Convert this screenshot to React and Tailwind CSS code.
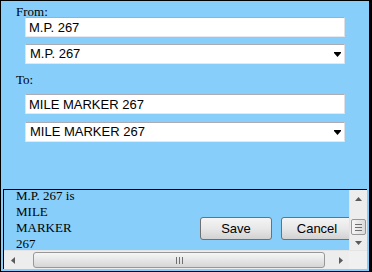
import React from 'react';

const serif = "font-['Liberation_Serif',serif]";
const sans = "font-['Liberation_Sans',Arial,sans-serif]";

const DropArrow = () => (
    <svg width="7" height="5" viewBox="0 0 7 5">
        <rect x="0" y="0" width="7" height="1" fill="#000" />
        <polygon points="0,1 7,1 3.5,5" fill="#000" />
    </svg>
);

const TextBox = ({ value }) => (
    <input
        readOnly
        defaultValue={value}
        className={`ml-[24px] block h-[20px] w-[320px] border border-t-[#abadb3] border-l-[#e2e3ea] border-r-[#dbdfe6] border-b-[#e3e9ef] bg-white px-[3px] text-[13px] leading-[18px] text-black outline-none ${sans}`}
    />
);

const SelectBox = ({ value, className = '' }) => (
    <div
        className={`ml-[24px] flex h-[20px] w-[320px] items-center justify-between border border-t-[#abadb3] border-l-[#e2e3ea] border-r-[#dbdfe6] border-b-[#e3e9ef] bg-white pl-[4px] pr-[3px] text-[13px] leading-[18px] text-black ${sans} ${className}`}
    >
        <span>{value}</span>
        <DropArrow />
    </div>
);

const Btn = ({ children, className = '' }) => (
    <div
        className={`flex h-[23px] w-[72px] shrink-0 items-center justify-center rounded-[3px] border border-[#707070] bg-linear-to-b from-[#f4f4f4] via-[#e8e8e8] to-[#d2d2d2] text-[13px] text-black ${sans} ${className}`}
    >
        {children}
    </div>
);

const Tri = ({ dir }) => {
    const pts = {
        up: '0,4 7,4 3.5,0',
        down: '0,0 7,0 3.5,4',
        left: '4,0 4,7 0,3.5',
        right: '0,0 0,7 4,3.5',
    }[dir];
    const horiz = dir === 'left' || dir === 'right';
    return (
        <svg width={horiz ? 4 : 7} height={horiz ? 7 : 4} viewBox={horiz ? '0 0 4 7' : '0 0 7 4'}>
            <polygon points={pts} fill="#5a5a5a" />
        </svg>
    );
};

export default function App() {
    return (
        <div className="flex h-[272px] w-[372px] flex-col border-t border-l border-b border-r-[3px] border-black bg-[#87cefa]">
            {/* form fields */}
            <div className="flex-1 pt-[3px]">
                <div className={`ml-[15px] h-[13px] text-[13px] leading-[16px] text-black ${serif}`}>From:</div>
                <TextBox value="M.P. 267" />
                <SelectBox value="M.P. 267" className="mt-[7px]" />
                <div className={`ml-[15px] mt-[8px] h-[22px] text-[13px] leading-[16px] text-black ${serif}`}>To:</div>
                <TextBox value="MILE MARKER 267" />
                <SelectBox value="MILE MARKER 267" className="mt-[8px]" />
            </div>

            {/* scrolling result panel */}
            <div className="mb-[2px] ml-[2px] flex h-[80px] w-[364px] flex-col border-t border-l border-black">
                <div className="flex h-[60px]">
                    <div className="flex w-[345px] items-start overflow-hidden">
                        <div className={`-mt-[2px] ml-[12px] w-[64px] shrink-0 text-[13px] leading-[16px] text-black ${serif}`}>
                            M.P. 267 is MILE MARKER 267
                        </div>
                        <Btn className="ml-[120px] mt-[27px]">Save</Btn>
                        <Btn className="ml-[9px] mt-[27px]">Cancel</Btn>
                    </div>
                    {/* vertical scrollbar */}
                    <div className="flex w-[18px] flex-col border-l border-[#e4e4e4] bg-[#ededed]">
                        <div className="flex h-[15px] items-center justify-center pt-[2px]">
                            <Tri dir="up" />
                        </div>
                        <div className="flex-1" />
                        <div className="mx-[1px] flex h-[16px] flex-col items-center justify-center gap-[2px] rounded-[2px] border border-[#979797] bg-linear-to-r from-[#f6f6f6] to-[#dadada]">
                            <div className="h-px w-[7px] bg-[#6f6f6f]" />
                            <div className="h-px w-[7px] bg-[#6f6f6f]" />
                            <div className="h-px w-[7px] bg-[#6f6f6f]" />
                        </div>
                        <div className="flex h-[15px] items-center justify-center">
                            <Tri dir="down" />
                        </div>
                    </div>
                </div>
                {/* horizontal scrollbar */}
                <div className="flex h-[19px] border-t border-[#e4e4e4] bg-[#ededed]">
                    <div className="flex w-[345px] items-center">
                        <div className="flex w-[17px] justify-center">
                            <Tri dir="left" />
                        </div>
                        <div className="w-[12px]" />
                        <div className="flex h-[16px] w-[292px] items-center justify-center gap-[2px] rounded-[3px] border border-[#979797] bg-linear-to-b from-[#f6f6f6] to-[#d6d6d6]">
                            <div className="h-[7px] w-px bg-[#6f6f6f]" />
                            <div className="h-[7px] w-px bg-[#6f6f6f]" />
                            <div className="h-[7px] w-px bg-[#6f6f6f]" />
                        </div>
                        <div className="flex-1" />
                        <div className="flex w-[17px] justify-center">
                            <Tri dir="right" />
                        </div>
                    </div>
                    <div className="w-[18px] bg-[#f0f0f0]" />
                </div>
            </div>
        </div>
    );
}
